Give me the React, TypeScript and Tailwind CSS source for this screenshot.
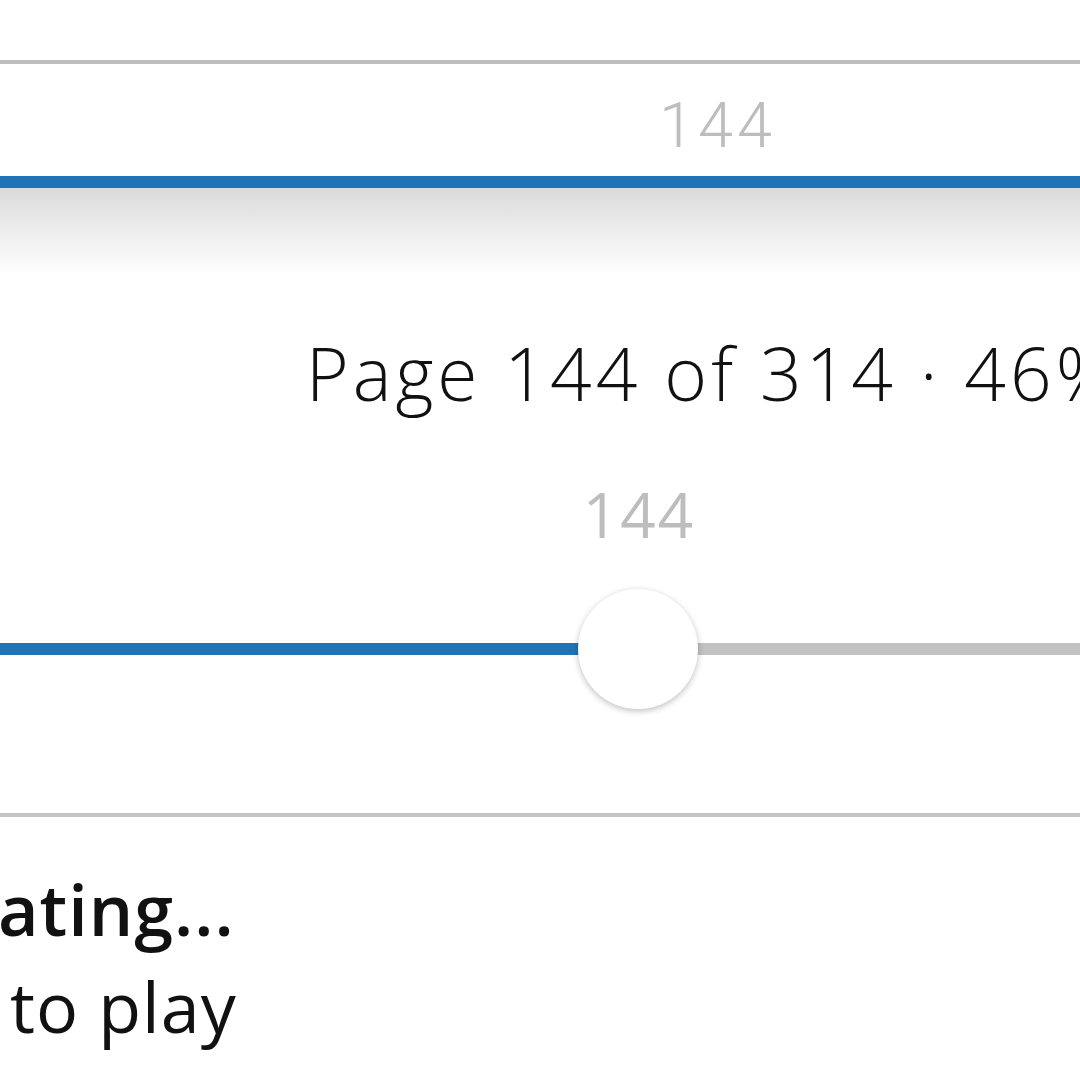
export default function App() {
  return (
    <div className="w-[1080px] h-[1080px] overflow-hidden bg-white" style={{ fontFamily: '"Open Sans", "Noto Sans", sans-serif' }}>
      <div className="pt-[60px]">
        <div className="h-[4px] bg-[#bdbdbd]" />
        <div className="h-[112px] pl-[659px] pt-[30px]">
          <span className="block text-[63px] leading-none font-light tracking-[4px] text-[#bdbdbd]" style={{ fontFamily: 'Roboto, sans-serif' }}>
            144
          </span>
        </div>
        <div className="h-[12px] bg-[#1f74b8]" />
        <div className="h-[88px] bg-gradient-to-b from-[#dadada] via-[#eeeeee] to-white" />
      </div>

      <div className="pl-[306px] pt-[60px]">
        <div className="text-[73px] leading-none font-light tracking-[4px] text-[#111] whitespace-nowrap">Page 144 of 314 · 46%</div>
      </div>

      <div className="flex justify-center w-[240px] ml-[519px] mt-[74px]">
        <span className="text-[62px] leading-none tracking-[2px] text-[#bdbdbd]">144</span>
      </div>

      <div className="flex items-center h-[120px] mt-[44px]">
        <div className="w-[580px] h-[12px] bg-[#1f74b8]" />
        <div className="w-[120px] h-[120px] -mx-[2px] rounded-full bg-white shadow-[0_2px_6px_rgba(0,0,0,0.25)] z-10 shrink-0" />
        <div className="flex-1 h-[12px] bg-[#c2c2c2]" />
      </div>

      <div className="h-[4px] bg-[#c4c4c4] mt-[104px]" />

      <div className="pt-[44px] text-[70px] leading-[97px] text-[#111] whitespace-nowrap">
        <div className="font-semibold tracking-[1px] -ml-[2px]">ating...</div>
        <div className="pl-[10px] tracking-[1px]">to play</div>
      </div>
    </div>
  )
}
